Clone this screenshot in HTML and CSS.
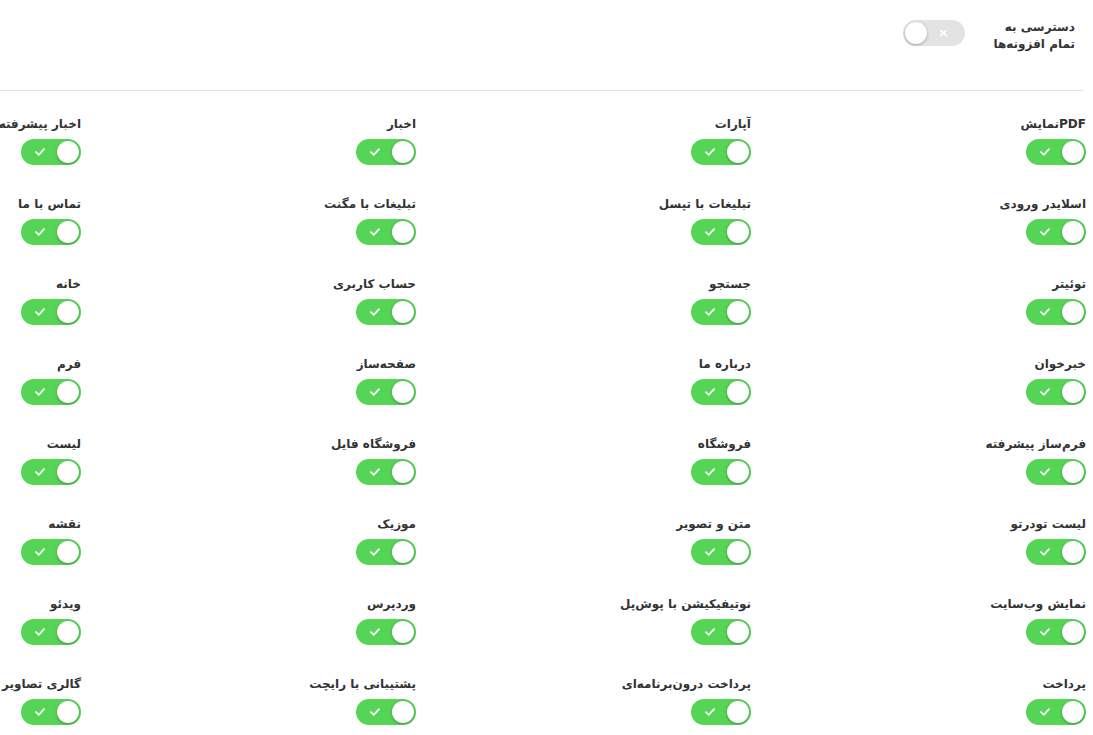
FILE: index.html
```html
<!DOCTYPE html>
<html lang="fa" dir="rtl">
<head>
    <meta charset="UTF-8">
    <meta name="viewport" content="width=device-width, initial-scale=1.0">
    <title>افزونه‌ها</title>
    <link rel="stylesheet" href="styles.css">
</head>
<body>
    <div class="header">
        <div class="header-label">دسترسی به<br>تمام افزونه‌ها</div>
        <label class="switch off"><span class="mark">×</span><span class="knob"></span></label>
    </div>
    <hr class="divider">

    <div class="plugins" id="plugins"></div>

    <script>
        // plugin names, right to left, row by row
        const plugins = [
            'PDFنمایش', 'آپارات', 'اخبار', 'اخبار پیشرفته',
            'اسلایدر ورودی', 'تبلیغات با تپسل', 'تبلیغات با مگنت', 'تماس با ما',
            'توئیتر', 'جستجو', 'حساب کاربری', 'خانه',
            'خبرخوان', 'درباره ما', 'صفحه‌ساز', 'فرم',
            'فرم‌ساز پیشرفته', 'فروشگاه', 'فروشگاه فایل', 'لیست',
            'لیست تودرتو', 'متن و تصویر', 'موزیک', 'نقشه',
            'نمایش وب‌سایت', 'نوتیفیکیشن با پوش‌پل', 'وردپرس', 'ویدئو',
            'پرداخت', 'پرداخت درون‌برنامه‌ای', 'پشتیبانی با رایچت', 'گالری تصاویر'
        ];

        const check = '<svg class="check" width="10" height="8" viewBox="0 0 10 8"><polyline points="1,4.2 3.8,6.8 9,1.2" fill="none" stroke="#fff" stroke-width="1.8" stroke-linecap="round" stroke-linejoin="round"/></svg>';

        document.getElementById('plugins').innerHTML = plugins.map(name =>
            '<div class="item"><span class="name">' + name + '</span>' +
            '<label class="switch on">' + check + '<span class="knob"></span></label></div>'
        ).join('');
    </script>
</body>
</html>
```

FILE: styles.css
```css
body {
    font-family: "DejaVu Sans", "Noto Sans", sans-serif;
    background-color: #fff;
    color: #333;
    margin: 0;
    padding: 0;
    direction: rtl;
}
.header {
    display: flex;
    align-items: center;
    height: 66px;
    padding-right: 18px;
    margin-bottom: 24px;
}
.header-label {
    width: 110px;
    font-size: 12px;
    font-weight: bold;
    line-height: 17px;
    color: #333;
    padding-top: 6px;
}
.divider {
    border: none;
    border-top: 1px solid #e2e2e2;
    margin: 0 10px 0 0;
}
.plugins {
    display: grid;
    grid-template-columns: repeat(3, 335px) 1fr;
    grid-auto-rows: 80px;
    padding: 24px 7px 0 0;
}
.item {
    display: flex;
    flex-direction: column;
    align-items: flex-start;
    gap: 6px;
}
.name {
    font-size: 12px;
    font-weight: bold;
    line-height: 18px;
    color: #333;
    white-space: nowrap;
}
.switch {
    position: relative;
    display: block;
    width: 60px;
    height: 26px;
    border-radius: 13px;
    direction: ltr;
    cursor: pointer;
}
.switch.on {
    background-color: #55d455;
}
.switch.off {
    width: 62px;
    background-color: #e3e3e3;
}
.knob {
    position: absolute;
    top: 2px;
    width: 22px;
    height: 22px;
    border-radius: 50%;
    background-color: #fff;
    box-shadow: 0 1px 3px rgba(0, 0, 0, 0.3);
}
.switch.on .knob {
    right: 2px;
}
.switch.off .knob {
    left: 2px;
}
.check {
    position: absolute;
    left: 14px;
    top: 9px;
}
.mark {
    position: absolute;
    top: 0;
    right: 16px;
    line-height: 26px;
    font-size: 13px;
    font-weight: bold;
    color: #fff;
}
```
